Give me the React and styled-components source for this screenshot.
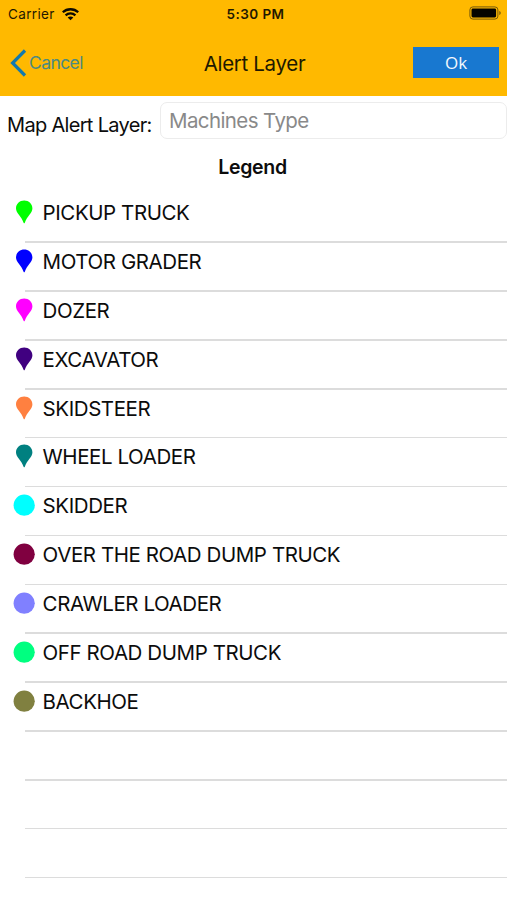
import React from "react";
import styled, { createGlobalStyle } from "styled-components";

const GlobalStyle = createGlobalStyle`
  *, *::before, *::after { box-sizing: border-box; }
  body {
    margin: 0;
    background: #fff;
    color: #0c0c0c;
    font-family: Inter, "Liberation Sans", sans-serif;
  }
`;

const Screen = styled.div`
  width: 507px;
  height: 900px;
  overflow: hidden;
  background: #fff;
`;

const Header = styled.header`
  height: 96px;
  background: #ffb900;
`;

const StatusBar = styled.div`
  height: 28px;
  display: grid;
  grid-template-columns: 1fr auto 1fr;
  align-items: center;
  padding: 0 6px 0 8px;
  font-size: 13.5px;
  line-height: 28px;
  color: #1f1800;
`;

const Carrier = styled.div`
  display: flex;
  align-items: center;
  gap: 7px;
  letter-spacing: 0.35px;
`;

const Time = styled.div`
  padding-left: 2px;
  font-weight: 600;
  letter-spacing: 0.45px;
`;

const BatterySlot = styled.div`
  display: flex;
  justify-content: flex-end;
  padding-bottom: 2px;
`;

const NavBar = styled.nav`
  height: 68px;
  display: grid;
  grid-template-columns: 1fr auto 1fr;
  align-items: center;
  padding: 0 8px 0 10px;
`;

const CancelButton = styled.button`
  display: flex;
  align-items: center;
  gap: 2px;
  height: 40px;
  margin-top: 2px;
  padding: 0;
  border: 0;
  background: none;
  color: #4d8a80;
  font: 400 17.5px/40px Inter, sans-serif;
  letter-spacing: -0.6px;
`;

const Title = styled.h1`
  margin: 0;
  padding-top: 4px;
  font-size: 20.5px;
  font-weight: 400;
  line-height: 40px;
  letter-spacing: -0.32px;
  color: #201800;
`;

const OkButton = styled.button`
  justify-self: end;
  width: 86px;
  height: 31px;
  padding: 0;
  border: 0;
  background: #1878d0;
  color: #f4f9fd;
  font: 400 17px/31px "Open Sans", sans-serif;
`;

const Filter = styled.label`
  display: flex;
  align-items: flex-start;
  height: 50px;
  padding: 6px 0 0 7px;
`;

const FilterLabel = styled.span`
  width: 153px;
  padding-top: 3px;
  font-size: 20px;
  line-height: 40px;
  letter-spacing: -0.68px;
  white-space: nowrap;
`;

const FilterInput = styled.input`
  flex: 1;
  min-width: 0;
  height: 37px;
  padding: 0 8px 1px;
  border: 1px solid #ececec;
  border-radius: 7px;
  outline: 0;
  background: #fff;
  font: 400 20.5px Inter, sans-serif;
  letter-spacing: -0.6px;
  &::placeholder { color: #898989; opacity: 1; }
`;

const LegendTitle = styled.h2`
  height: 48px;
  margin: 0;
  padding-right: 2px;
  text-align: center;
  font-size: 19.5px;
  font-weight: 600;
  line-height: 42px;
  letter-spacing: -0.3px;
`;

const List = styled.ul`
  margin: 0;
  padding: 0;
  list-style: none;
`;

const Row = styled.li`
  height: 48.88px;
  display: flex;
  flex-direction: column;
`;

const RowContent = styled.div`
  flex: 1;
  display: flex;
  align-items: flex-start;
  padding-left: 13px;
`;

const Marker = styled.svg`
  width: 22px;
  height: 24px;
  margin-top: 6px;
  margin-right: 7.6px;
  flex: none;
  fill: ${(p) => p.$color};
`;

const Name = styled.span`
  font-size: 20.5px;
  line-height: 38px;
  letter-spacing: -0.42px;
  white-space: nowrap;
`;

const Divider = styled.div`
  height: 1.5px;
  margin-left: 25px;
  background: #dcdcdc;
`;

const machines = [
  { name: "PICKUP TRUCK", color: "#00ff00", pin: true },
  { name: "MOTOR GRADER", color: "#0000ff", pin: true },
  { name: "DOZER", color: "#ff00ff", pin: true },
  { name: "EXCAVATOR", color: "#400080", pin: true },
  { name: "SKIDSTEER", color: "#ff8040", pin: true },
  { name: "WHEEL LOADER", color: "#008080", pin: true },
  { name: "SKIDDER", color: "#00ffff" },
  { name: "OVER THE ROAD DUMP TRUCK", color: "#800040" },
  { name: "CRAWLER LOADER", color: "#8080ff" },
  { name: "OFF ROAD DUMP TRUCK", color: "#00ff80" },
  { name: "BACKHOE", color: "#808040" },
];

const emptyRows = [0, 1, 2];

function WifiIcon() {
  return (
    <svg width="17" height="13" viewBox="0 0 17 13" fill="none" stroke="#0d0a00" strokeWidth="2.3">
      <path d="M.8 4.300C5 .2 12 .2 16.200 4.300" />
      <path d="M3.600 7.300c2.700-2.500 7.100-2.500 9.800 0" />
      <path d="M8.500 12.200 5.700 9.500c1.600-1.300 4-1.300 5.600 0z" fill="#0d0a00" stroke="none" />
    </svg>
  );
}

function BatteryIcon() {
  return (
    <svg width="32" height="14" viewBox="0 0 32 14">
      <rect x="0.9" y="0.9" width="28" height="12.2" rx="3" fill="none" stroke="#75590a" strokeWidth="1" />
      <rect x="2.5" y="2.5" width="24.6" height="9" rx="1.4" fill="#050400" />
      <path d="M30.3 5v4c.9-.3 1.4-1.1 1.4-2s-.5-1.7-1.4-2z" fill="#75590a" />
    </svg>
  );
}

function BackIcon() {
  return (
    <svg width="17" height="28" viewBox="0 0 17 28" fill="none" stroke="#1279ad" strokeWidth="3.2">
      <path d="M15 1.5 2.6 14 15 26.5" />
    </svg>
  );
}

function MachineMarker({ color, pin }) {
  return (
    <Marker viewBox="0 0 22 24" $color={color}>
      {pin ? (
        <path d="M11.200 .6c4.600 0 8.200 3.500 8.200 8 0 4.400-5.200 7.600-7.700 14.300-.2.600-.8.600-1 0C8.200 16.200 3 13 3 8.600c0-4.500 3.600-8 8.200-8z" />
      ) : (
        <circle cx="11.200" cy="12.200" r="10.600" />
      )}
    </Marker>
  );
}

export default function App() {
  return (
    <Screen>
      <GlobalStyle />
      <Header>
        <StatusBar>
          <Carrier>
            Carrier
            <WifiIcon />
          </Carrier>
          <Time>5:30 PM</Time>
          <BatterySlot>
            <BatteryIcon />
          </BatterySlot>
        </StatusBar>
        <NavBar>
          <CancelButton>
            <BackIcon />
            Cancel
          </CancelButton>
          <Title>Alert Layer</Title>
          <OkButton>Ok</OkButton>
        </NavBar>
      </Header>
      <Filter>
        <FilterLabel>Map Alert Layer:</FilterLabel>
        <FilterInput placeholder="Machines Type" />
      </Filter>
      <LegendTitle>Legend</LegendTitle>
      <List>
        {machines.map((m) => (
          <Row key={m.name}>
            <RowContent>
              <MachineMarker color={m.color} pin={m.pin} />
              <Name>{m.name}</Name>
            </RowContent>
            <Divider />
          </Row>
        ))}
        {emptyRows.map((n) => (
          <Row key={n}>
            <RowContent />
            <Divider />
          </Row>
        ))}
      </List>
    </Screen>
  );
}
